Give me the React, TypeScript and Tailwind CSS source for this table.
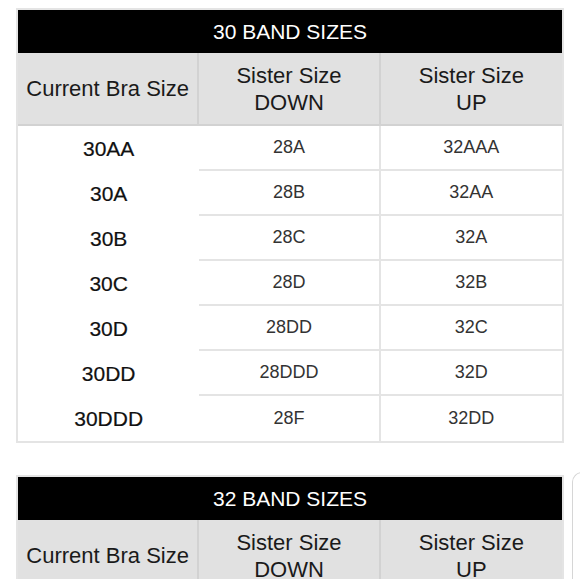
import React from "react";

const tables = [
  {
    title: "30 BAND SIZES",
    rows: [
      ["30AA", "28A", "32AAA"],
      ["30A", "28B", "32AA"],
      ["30B", "28C", "32A"],
      ["30C", "28D", "32B"],
      ["30D", "28DD", "32C"],
      ["30DD", "28DDD", "32D"],
      ["30DDD", "28F", "32DD"],
    ],
  },
  {
    title: "32 BAND SIZES",
    rows: [
      ["32AA", "30A", "34AAA"],
      ["32A", "30B", "34AA"],
    ],
  },
];

function SizeTable({ title, rows }: { title: string; rows: string[][] }) {
  return (
    <div className="w-[548px] border-2 border-[#e4e4e4] bg-white">
      <div className="h-[43px] bg-black text-white flex items-center justify-center text-[21px] leading-none">
        {title}
      </div>
      <div className="grid grid-cols-3 h-[73px] bg-[#e1e1e1] border-b-2 border-[#d2d2d2] text-[22px] leading-[27px] text-[#1a1a1a]">
        <div className="flex items-center justify-center text-center border-r-2 border-[#d2d2d2]">
          Current Bra Size
        </div>
        <div className="flex items-center justify-center text-center border-r-2 border-[#d2d2d2]">
          Sister Size
          <br />
          DOWN
        </div>
        <div className="flex items-center justify-center text-center">
          Sister Size
          <br />
          UP
        </div>
      </div>
      {rows.map((r, i) => {
        const last = i === rows.length - 1;
        return (
          <div key={i} className="grid grid-cols-3 h-[45px]">
            <div className="flex items-center justify-center text-[21px] text-[#111] [-webkit-text-stroke:0.2px_#111]">
              {r[0]}
            </div>
            <div
              className={`flex items-center justify-center text-[18px] text-[#333] border-r-2 border-[#e4e4e4] ${
                last ? "" : "border-b-2"
              }`}
            >
              {r[1]}
            </div>
            <div
              className={`flex items-center justify-center text-[18px] text-[#333] border-[#e4e4e4] ${
                last ? "" : "border-b-2"
              }`}
            >
              {r[2]}
            </div>
          </div>
        );
      })}
    </div>
  );
}

export default function App() {
  return (
    <div
      className="relative w-[580px] h-[579px] overflow-hidden bg-white"
      style={{ fontFamily: '"Liberation Sans", Arial, sans-serif' }}
    >
      <div className="flex flex-col gap-[32px] pl-[16px] pt-[8px]">
        {tables.map((t) => (
          <SizeTable key={t.title} title={t.title} rows={t.rows} />
        ))}
      </div>
      <div className="absolute left-[572px] top-[472px] w-[30px] h-[140px] border-l border-t border-[#d6d6d6] rounded-tl-[10px]" />
    </div>
  );
}
